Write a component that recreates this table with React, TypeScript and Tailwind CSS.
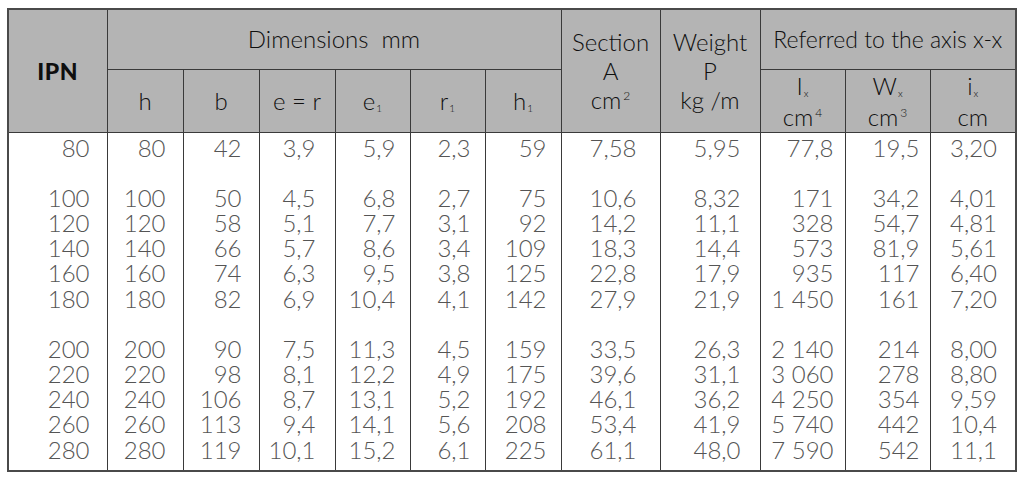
import React from 'react';

const rows: (string[] | null)[] = [
  ['80', '80', '42', '3,9', '5,9', '2,3', '59', '7,58', '5,95', '77,8', '19,5', '3,20'],
  null,
  ['100', '100', '50', '4,5', '6,8', '2,7', '75', '10,6', '8,32', '171', '34,2', '4,01'],
  ['120', '120', '58', '5,1', '7,7', '3,1', '92', '14,2', '11,1', '328', '54,7', '4,81'],
  ['140', '140', '66', '5,7', '8,6', '3,4', '109', '18,3', '14,4', '573', '81,9', '5,61'],
  ['160', '160', '74', '6,3', '9,5', '3,8', '125', '22,8', '17,9', '935', '117', '6,40'],
  ['180', '180', '82', '6,9', '10,4', '4,1', '142', '27,9', '21,9', '1 450', '161', '7,20'],
  null,
  ['200', '200', '90', '7,5', '11,3', '4,5', '159', '33,5', '26,3', '2 140', '214', '8,00'],
  ['220', '220', '98', '8,1', '12,2', '4,9', '175', '39,6', '31,1', '3 060', '278', '8,80'],
  ['240', '240', '106', '8,7', '13,1', '5,2', '192', '46,1', '36,2', '4 250', '354', '9,59'],
  ['260', '260', '113', '9,4', '14,1', '5,6', '208', '53,4', '41,9', '5 740', '442', '10,4'],
  ['280', '280', '119', '10,1', '15,2', '6,1', '225', '61,1', '48,0', '7 590', '542', '11,1'],
];

// column widths and right padding of the numbers, measured off the sheet
const widths = ['w-[99px]', 'w-[76px]', 'w-[76px]', 'w-[76px]', 'w-[75px]', 'w-[75px]', 'w-[76px]', 'w-[99px]', 'w-[100px]', 'w-[85px]', 'w-[85px]', 'w-[86px]'];
const pads = ['pr-[17px]', 'pr-[17px]', 'pr-[17px]', 'pr-[19px]', 'pr-[14px]', 'pr-[14px]', 'pr-[14px]', 'pr-[23px]', 'pr-[19px]', 'pr-[11px]', 'pr-[10px]', 'pr-[18px]'];

const cell = 'border border-[#3a3a3a] bg-[#b4b4b4] text-[#0f0f0f] text-center align-middle p-0';
const th = `${cell} font-light`;

function Sub({ children }: { children: React.ReactNode }) {
  return <sub className="text-[10px] ml-[1px] -bottom-[2px]">{children}</sub>;
}

function Sup({ children }: { children: React.ReactNode }) {
  return <sup className="text-[12px] ml-[2px] -top-[9px]">{children}</sup>;
}

export default function App() {
  return (
    <div className="min-h-screen bg-white pt-[8px] pl-[7px]" style={{ fontFamily: 'Lato, "Liberation Sans", sans-serif' }}>
      <table className="table-fixed border-collapse w-[1008px] border-2 border-[#4a4a4a]">
        <colgroup>
          {widths.map((w, i) => (
            <col key={i} className={w} />
          ))}
        </colgroup>
        <thead>
          <tr className="h-[60px] text-[24px]">
            <th rowSpan={2} className={`${cell} font-black text-[23px] tracking-wide`}>IPN</th>
            <th colSpan={6} className={th}>
              Dimensions&nbsp;&nbsp;mm
            </th>
            <th rowSpan={2} className={`${th} leading-[29px]`}>
              Section
              <br />A<br />
              cm<Sup>2</Sup>
            </th>
            <th rowSpan={2} className={`${th} leading-[29px]`}>
              Weight
              <br />P<br />
              kg /m
            </th>
            <th colSpan={3} className={`${th} text-[23px]`}>Referred to the axis x-x</th>
          </tr>
          <tr className="h-[60px] text-[24px]">
            <th className={th}>h</th>
            <th className={th}>b</th>
            <th className={th}>e = r</th>
            <th className={th}>
              e<Sub>1</Sub>
            </th>
            <th className={th}>
              r<Sub>1</Sub>
            </th>
            <th className={th}>
              h<Sub>1</Sub>
            </th>
            <th className={`${th} leading-[31px]`}>
              I<Sub>x</Sub>
              <br />
              cm<Sup>4</Sup>
            </th>
            <th className={`${th} leading-[31px]`}>
              W<Sub>x</Sub>
              <br />
              cm<Sup>3</Sup>
            </th>
            <th className={`${th} leading-[31px]`}>
              i<Sub>x</Sub>
              <br />
              cm
            </th>
          </tr>
        </thead>
        <tbody className="text-[24px] font-light text-[#555] leading-[25.17px]">
          {rows.map((row, r) => {
            const edge = r === 0 ? 'pt-[2px]' : r === rows.length - 1 ? 'pb-[8px]' : '';
            return (
              <tr key={r}>
                {widths.map((_, c) => (
                  <td key={c} className={`border-x border-[#3a3a3a] text-right whitespace-pre h-[25.17px] p-0 ${pads[c]} ${edge}`}>
                    {row ? row[c] : ' '}
                  </td>
                ))}
              </tr>
            );
          })}
        </tbody>
      </table>
    </div>
  );
}
